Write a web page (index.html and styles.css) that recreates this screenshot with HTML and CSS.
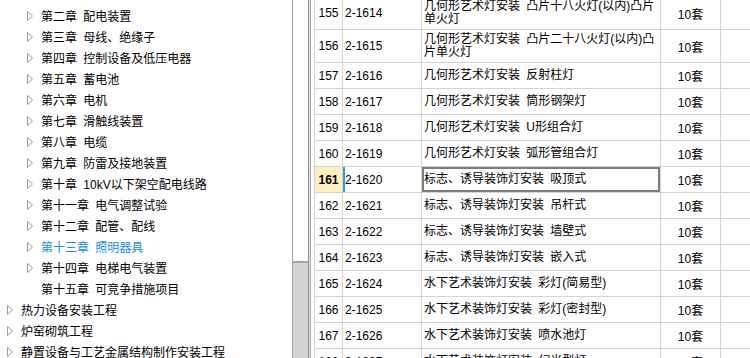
FILE: index.html
```html
<!DOCTYPE html>
<html lang="zh-CN">
<head>
    <meta charset="UTF-8">
    <title>定额库 - 照明器具</title>
    <link rel="stylesheet" href="styles.css">
</head>
<body>
<div class="app">

    <div class="tree">
        <ul class="tree-list">
            <li class="node sub"><svg class="arrow" viewBox="0 0 6 10"><path d="M0.5 0.5 L5.5 5 L0.5 9.5 Z"/></svg><span>第二章 配电装置</span></li>
            <li class="node sub"><svg class="arrow" viewBox="0 0 6 10"><path d="M0.5 0.5 L5.5 5 L0.5 9.5 Z"/></svg><span>第三章 母线、绝缘子</span></li>
            <li class="node sub"><svg class="arrow" viewBox="0 0 6 10"><path d="M0.5 0.5 L5.5 5 L0.5 9.5 Z"/></svg><span>第四章 控制设备及低压电器</span></li>
            <li class="node sub"><svg class="arrow" viewBox="0 0 6 10"><path d="M0.5 0.5 L5.5 5 L0.5 9.5 Z"/></svg><span>第五章 蓄电池</span></li>
            <li class="node sub"><svg class="arrow" viewBox="0 0 6 10"><path d="M0.5 0.5 L5.5 5 L0.5 9.5 Z"/></svg><span>第六章 电机</span></li>
            <li class="node sub"><svg class="arrow" viewBox="0 0 6 10"><path d="M0.5 0.5 L5.5 5 L0.5 9.5 Z"/></svg><span>第七章 滑触线装置</span></li>
            <li class="node sub"><svg class="arrow" viewBox="0 0 6 10"><path d="M0.5 0.5 L5.5 5 L0.5 9.5 Z"/></svg><span>第八章 电缆</span></li>
            <li class="node sub"><svg class="arrow" viewBox="0 0 6 10"><path d="M0.5 0.5 L5.5 5 L0.5 9.5 Z"/></svg><span>第九章 防雷及接地装置</span></li>
            <li class="node sub"><svg class="arrow" viewBox="0 0 6 10"><path d="M0.5 0.5 L5.5 5 L0.5 9.5 Z"/></svg><span>第十章 10kV以下架空配电线路</span></li>
            <li class="node sub"><svg class="arrow" viewBox="0 0 6 10"><path d="M0.5 0.5 L5.5 5 L0.5 9.5 Z"/></svg><span>第十一章 电气调整试验</span></li>
            <li class="node sub"><svg class="arrow" viewBox="0 0 6 10"><path d="M0.5 0.5 L5.5 5 L0.5 9.5 Z"/></svg><span>第十二章 配管、配线</span></li>
            <li class="node sub active"><svg class="arrow" viewBox="0 0 6 10"><path d="M0.5 0.5 L5.5 5 L0.5 9.5 Z"/></svg><span>第十三章 照明器具</span></li>
            <li class="node sub"><svg class="arrow" viewBox="0 0 6 10"><path d="M0.5 0.5 L5.5 5 L0.5 9.5 Z"/></svg><span>第十四章 电梯电气装置</span></li>
            <li class="node sub leaf"><span>第十五章 可竞争措施项目</span></li>
            <li class="node top"><svg class="arrow" viewBox="0 0 6 10"><path d="M0.5 0.5 L5.5 5 L0.5 9.5 Z"/></svg><span>热力设备安装工程</span></li>
            <li class="node top"><svg class="arrow" viewBox="0 0 6 10"><path d="M0.5 0.5 L5.5 5 L0.5 9.5 Z"/></svg><span>炉窑砌筑工程</span></li>
            <li class="node top"><svg class="arrow" viewBox="0 0 6 10"><path d="M0.5 0.5 L5.5 5 L0.5 9.5 Z"/></svg><span>静置设备与工艺金属结构制作安装工程</span></li>
        </ul>
    </div>

    <div class="vscroll">
        <div class="thumb"></div>
        <div class="track"></div>
    </div>

    <div class="splitter"></div>

    <div class="grid-wrap">
        <table class="grid">
            <colgroup>
                <col class="c-num">
                <col class="c-code">
                <col class="c-name">
                <col class="c-unit">
                <col class="c-rest">
            </colgroup>
            <tr class="tall">
                <td class="num">155</td><td class="code">2-1614</td>
                <td class="name">几何形艺术灯安装 凸片十八火灯(以内)凸片<br>单火灯</td>
                <td class="unit">10套</td><td></td>
            </tr>
            <tr class="tall">
                <td class="num">156</td><td class="code">2-1615</td>
                <td class="name">几何形艺术灯安装 凸片二十八火灯(以内)凸<br>片单火灯</td>
                <td class="unit">10套</td><td></td>
            </tr>
            <tr>
                <td class="num">157</td><td class="code">2-1616</td>
                <td class="name">几何形艺术灯安装 反射柱灯</td>
                <td class="unit">10套</td><td></td>
            </tr>
            <tr>
                <td class="num">158</td><td class="code">2-1617</td>
                <td class="name">几何形艺术灯安装 筒形钢架灯</td>
                <td class="unit">10套</td><td></td>
            </tr>
            <tr>
                <td class="num">159</td><td class="code">2-1618</td>
                <td class="name">几何形艺术灯安装 U形组合灯</td>
                <td class="unit">10套</td><td></td>
            </tr>
            <tr>
                <td class="num">160</td><td class="code">2-1619</td>
                <td class="name">几何形艺术灯安装 弧形管组合灯</td>
                <td class="unit">10套</td><td></td>
            </tr>
            <tr class="selected">
                <td class="num">161</td><td class="code">2-1620</td>
                <td class="name">标志、诱导装饰灯安装 吸顶式</td>
                <td class="unit">10套</td><td></td>
            </tr>
            <tr>
                <td class="num">162</td><td class="code">2-1621</td>
                <td class="name">标志、诱导装饰灯安装 吊杆式</td>
                <td class="unit">10套</td><td></td>
            </tr>
            <tr>
                <td class="num">163</td><td class="code">2-1622</td>
                <td class="name">标志、诱导装饰灯安装 墙壁式</td>
                <td class="unit">10套</td><td></td>
            </tr>
            <tr>
                <td class="num">164</td><td class="code">2-1623</td>
                <td class="name">标志、诱导装饰灯安装 嵌入式</td>
                <td class="unit">10套</td><td></td>
            </tr>
            <tr>
                <td class="num">165</td><td class="code">2-1624</td>
                <td class="name">水下艺术装饰灯安装 彩灯(简易型)</td>
                <td class="unit">10套</td><td></td>
            </tr>
            <tr>
                <td class="num">166</td><td class="code">2-1625</td>
                <td class="name">水下艺术装饰灯安装 彩灯(密封型)</td>
                <td class="unit">10套</td><td></td>
            </tr>
            <tr>
                <td class="num">167</td><td class="code">2-1626</td>
                <td class="name">水下艺术装饰灯安装 喷水池灯</td>
                <td class="unit">10套</td><td></td>
            </tr>
            <tr>
                <td class="num">168</td><td class="code">2-1627</td>
                <td class="name">水下艺术装饰灯安装 幻光型灯</td>
                <td class="unit">10套</td><td></td>
            </tr>
        </table>
    </div>

</div>
</body>
</html>
```

FILE: styles.css
```css
body {
    margin: 0;
    font-family: "Liberation Sans", "Noto Sans CJK SC", sans-serif;
    font-size: 12px;
    word-spacing: 3px;
    color: #000;
    background-color: #fff;
}

.app {
    display: flex;
    height: 358px;
    overflow: hidden;
}

/* left tree */
.tree {
    flex: none;
    width: 292px;
    overflow: hidden;
}

.tree-list {
    list-style: none;
    margin: 0;
    padding: 5px 0 0;
}

.node {
    display: flex;
    align-items: center;
    height: 21px;
    white-space: nowrap;
}

.node.sub {
    padding-left: 27px;
}

.node.top {
    padding-left: 7px;
}

.node.leaf {
    padding-left: 41px;
}

.arrow {
    flex: none;
    width: 6px;
    height: 10px;
    margin-right: 8px;
}

.arrow path {
    fill: #fff;
    stroke: #9c9c9c;
    stroke-width: 1;
}

.node.active {
    color: #1a8ce8;
}

/* scrollbar */
.vscroll {
    flex: none;
    width: 17px;
    box-sizing: border-box;
    border-left: 1px solid #a3a3a3;
    border-right: 1px solid #8a8a8a;
    display: flex;
    flex-direction: column;
}

.thumb {
    height: 261px;
    background-color: #fff;
    border-bottom: 2px solid #a5a5a5;
}

.track {
    flex: 1;
    background-color: #d4d4d4;
}

.splitter {
    flex: none;
    width: 2px;
    box-sizing: border-box;
    background-color: #e6e6e6;
    border-right: 1px solid #a8a8a8;
}

/* grid */
.grid-wrap {
    flex: 1;
    overflow: hidden;
    padding-left: 3px;
}

.grid {
    border-collapse: collapse;
    table-layout: fixed;
    width: 470px;
    margin-top: -4px;
}

.c-num { width: 28px; }
.c-code { width: 79px; }
.c-name { width: 239px; }
.c-unit { width: 60px; }
.c-rest { width: 64px; }

.grid td {
    border: 1px solid #d4d4d4;
    padding: 0 2px;
    white-space: nowrap;
    overflow: hidden;
}

.grid tr {
    height: 26px;
}

.grid tr.tall {
    height: 33px;
}

.grid .num,
.grid .unit {
    text-align: center;
    padding: 0;
}

.grid .name {
    line-height: 13px;
}

.selected .num {
    background-color: #fff0c2;
    font-weight: bold;
}

.selected .code {
    box-shadow: inset 2px 0 0 #2a9ddc;
}

.selected .name {
    box-shadow: inset 0 0 0 2px #7c7c7c;
}
```
